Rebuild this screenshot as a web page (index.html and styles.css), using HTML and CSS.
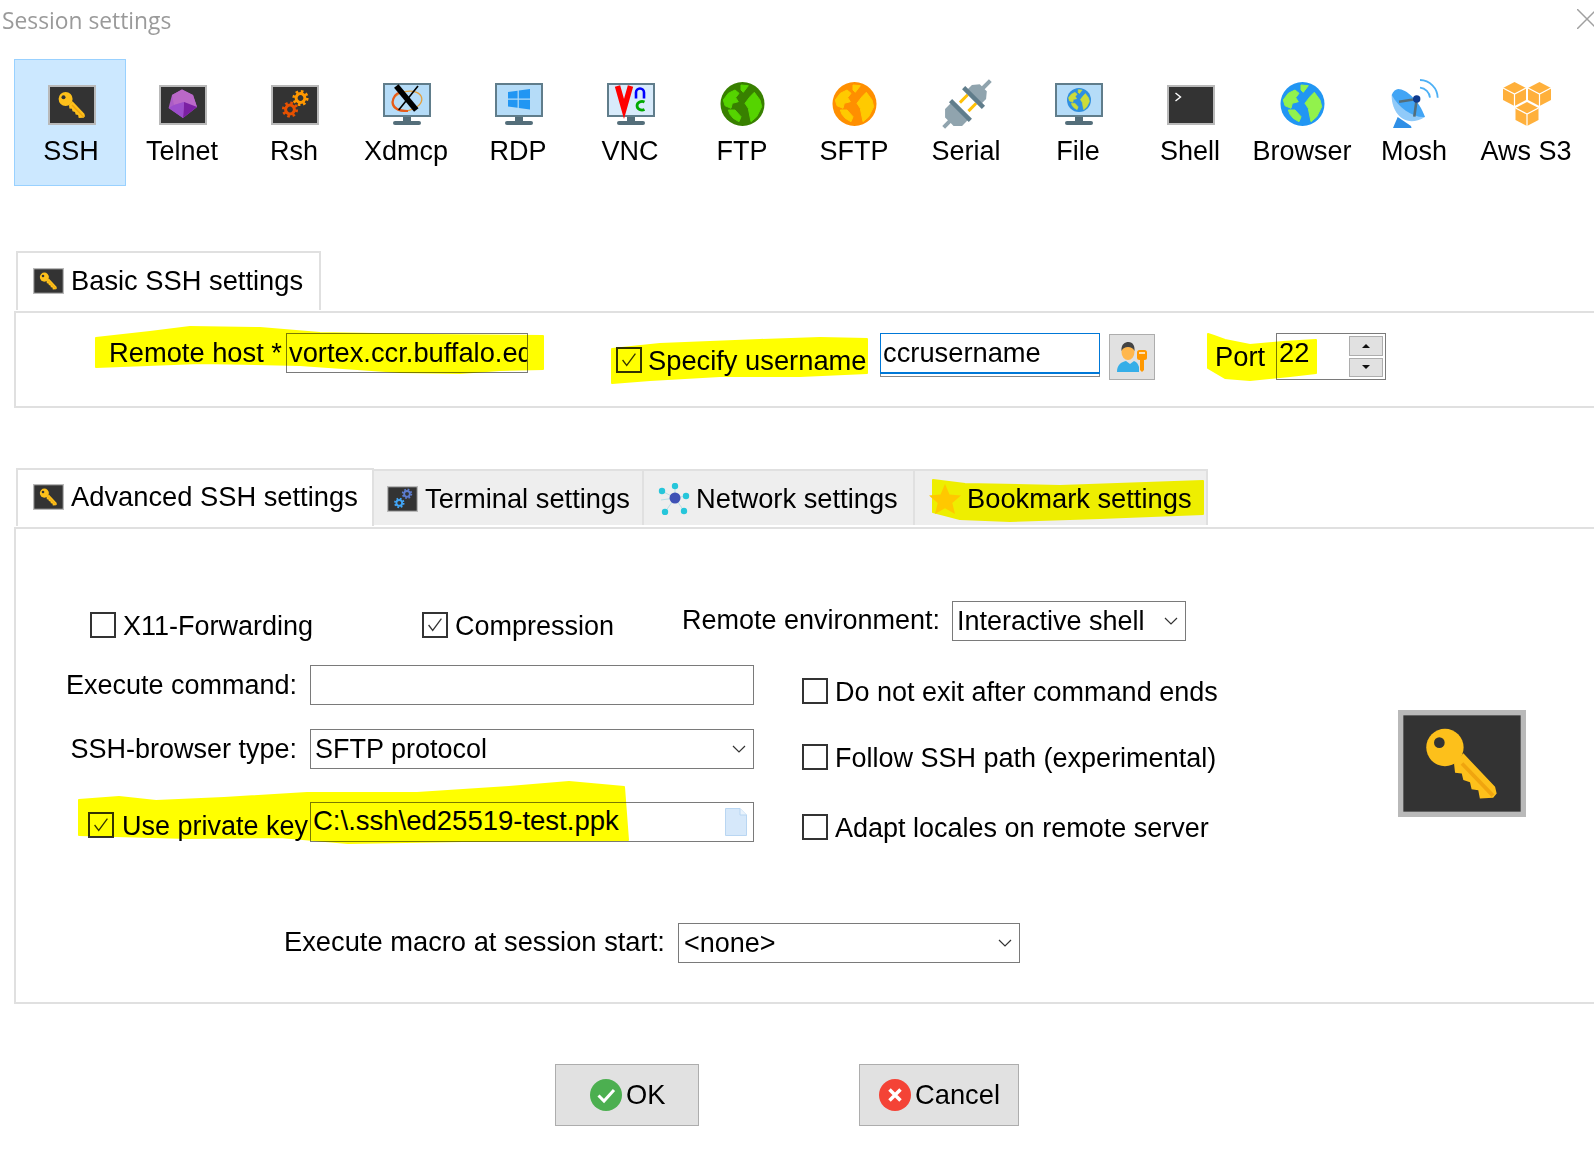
FILE: index.html
```html
<!DOCTYPE html>
<html lang="en">
<head>
<meta charset="utf-8">
<title>Session settings</title>
<link rel="stylesheet" href="styles.css">
</head>
<body>
<svg class="defs" aria-hidden="true">
  <defs>
    <g id="term"><rect x="1" y="6" width="46" height="38" fill="#333" stroke="#b9b9b9" stroke-width="2"/></g>
    <g id="key">
      <path d="M21 25 L24.5 21.2 L36.4 33.7 L37 36.2 L35.7 37.8 L30.7 38.1 L30.1 35 L27.6 34.6 L27 32 L24.5 31.2 L23.9 28.7 L21.4 28.5 Z" fill="#fdc01b"/>
      <path d="M24 25 L35.6 37" stroke="#f0a50f" stroke-width="1.4" fill="none"/>
      <circle cx="17.6" cy="19" r="7" fill="#fdc01b"/>
      <circle cx="15.5" cy="17.2" r="2" fill="#333"/>
    </g>
    <g id="key-term"><use href="#term"/><use href="#key"/></g>
    <g id="gear">
      <circle r="6.6" fill="none" stroke="currentColor" stroke-width="3" stroke-dasharray="2.6 2.6"/>
      <circle r="4.4" fill="none" stroke="currentColor" stroke-width="3"/>
    </g>
    <g id="monitor">
      <rect x="1" y="4" width="46" height="32" fill="#b5dcf8" stroke="#607d8b" stroke-width="2"/>
      <rect x="20" y="37" width="8" height="4" fill="#546e7a"/>
      <rect x="10" y="41" width="28" height="4" rx="2" fill="#546e7a"/>
    </g>
    <g id="land" fill="currentColor" stroke="currentColor" stroke-width="1" stroke-linejoin="round">
      <path d="M22 5 L29.3 5.7 L24.3 12.3 L22 10 Z"/>
      <path d="M16 10 L20 13.3 L16.7 17.7 L19.3 21.7 L13.3 23.3 L12 28.3 L6 25.7 L4.3 20 L9.300 13.3 Z"/>
      <path d="M9.300 30 L16 30 L22 36.700 L20 41.700 L14.300 38.300 L11 34.300 Z"/>
      <path d="M35.300 12.300 L41 20 L42.700 26.700 L37.700 36.700 L32 41.700 L29.300 28.300 L26 23.300 L31 16.700 Z"/>
    </g>
    <g id="cube">
      <path d="M11.5 0 L23 6 L23 18 L11.5 24 L0 18 L0 6 Z" fill="#ffb03b"/>
      <path d="M0 6 L11.5 12 L23 6 M11.5 12 L11.5 24" fill="none" stroke="#fff" stroke-width="1.2"/>
    </g>
    <g id="checkmark"><path d="M5 12 L9.5 18 L19 5" fill="none" stroke="#333" stroke-width="1.4"/></g>
  </defs>
</svg>

<div class="page">
  <header class="titlebar">
    <span class="title">Session settings</span>
    <svg class="close" viewBox="0 0 17 20"><path d="M0 0 L20 20 M0 20 L20 0" stroke="#a0a0a0" stroke-width="1.5" fill="none"/></svg>
  </header>

  <nav class="toolbar">
    <div class="tile tile-active">
      <svg class="tile-icon" viewBox="0 0 48 48"><use href="#key-term"/></svg><span>SSH</span>
    </div>
    <div class="tile">
      <svg class="tile-icon" viewBox="0 0 48 48"><use href="#term"/>
        <path d="M23 9.5 L34 15 L38 27 L24 38 L9.6 28 L13 15 Z" fill="#ab5cc6"/>
        <path d="M23 9.5 L34 15 L38 27 L25 22 L15 25 L13 15 Z" fill="#ba68c8"/>
        <path d="M25 22 L38 27 L24 38 Z" fill="#7b1fa2"/>
        <path d="M15 25 L25 22 L24 38 L9.6 28 Z" fill="#9c4dcc"/>
      </svg><span>Telnet</span>
    </div>
    <div class="tile">
      <svg class="tile-icon" viewBox="0 0 48 48"><use href="#term"/>
        <use href="#gear" x="29.5" y="18" color="#ff9800"/>
        <use href="#gear" x="19" y="29.5" color="#e65100"/>
      </svg><span>Rsh</span>
    </div>
    <div class="tile">
      <svg class="tile-icon" viewBox="0 0 48 48"><use href="#monitor"/>
        <ellipse cx="24" cy="21" rx="15" ry="9.500" transform="rotate(-12 24 21)" fill="none" stroke="#e6a03c" stroke-width="1.300"/>
        <path d="M21 11.500 C10 12 6 24 14 29 C17 31 22 31 25 31" fill="none" stroke="#e65a1a" stroke-width="2.200"/>
        <path d="M13.300 6 L33.300 30" stroke="#000" stroke-width="5.800"/>
        <path d="M35 6 L15.700 30" stroke="#000" stroke-width="1.600"/>
      </svg><span>Xdmcp</span>
    </div>
    <div class="tile">
      <svg class="tile-icon" viewBox="0 0 48 48"><use href="#monitor"/>
        <path d="M13 12 L22.6 10.7 L22.6 18.6 L13 18.6 Z M23.8 10.5 L35 9 L35 18.6 L23.8 18.6 Z M13 19.8 L22.6 19.8 L22.6 27.7 L13 26.4 Z M23.8 19.8 L35 19.8 L35 29.4 L23.8 27.9 Z" fill="#2196f3"/>
      </svg><span>RDP</span>
    </div>
    <div class="tile">
      <svg class="tile-icon" viewBox="0 0 48 48"><use href="#monitor"/>
        <rect x="2" y="5" width="44" height="30" fill="#d8ebfb"/>
        <path d="M10.500 6 L17 29 L23.500 6" fill="none" stroke="#f00" stroke-width="5.500"/>
        <path d="M29 18.500 V12.500 A4 4 0 0 1 37 12.500 V18.500" fill="none" stroke="#00f" stroke-width="2.600"/>
        <path d="M37.500 22 A5 4.300 0 1 0 37.500 29.500" fill="none" stroke="#0a0" stroke-width="2.800"/>
      </svg><span>VNC</span>
    </div>
    <div class="tile">
      <svg class="tile-icon" viewBox="0 0 48 48"><circle cx="23.500" cy="24" r="22" fill="#388000"/><use href="#land" color="#55d400"/></svg><span>FTP</span>
    </div>
    <div class="tile">
      <svg class="tile-icon" viewBox="0 0 48 48"><circle cx="23.500" cy="24" r="22" fill="#ff8f00"/><use href="#land" color="#ffca00"/></svg><span>SFTP</span>
    </div>
    <div class="tile">
      <svg class="tile-icon" viewBox="0 0 48 48">
        <g transform="rotate(45 24 24)">
          <path d="M14 13 L14 7 L19 1 L22 1 L22 -9 L26 -9 L26 1 L29 1 L34 7 L34 13 Z" fill="#90a4ae"/>
          <path d="M12 35 L12 43 L18 49 L22 49 L22 57 L26 57 L26 49 L30 49 L36 43 L36 35 Z" fill="#90a4ae"/>
          <rect x="16.500" y="17" width="3" height="11" fill="#ffc107"/>
          <rect x="28.500" y="17" width="3" height="11" fill="#ffc107"/>
          <rect x="10" y="12.500" width="28" height="4.500" fill="#607d8b"/>
          <rect x="10" y="31" width="28" height="4.500" fill="#607d8b"/>
        </g>
      </svg><span>Serial</span>
    </div>
    <div class="tile">
      <svg class="tile-icon" viewBox="0 0 48 48"><use href="#monitor"/>
        <circle cx="24" cy="20" r="12" fill="#2f8fe0"/>
        <use href="#land" color="#cddc39" transform="translate(11.200 6.900) scale(.545)"/>
      </svg><span>File</span>
    </div>
    <div class="tile">
      <svg class="tile-icon" viewBox="0 0 48 48"><use href="#term"/><path d="M8.500 13 L13.500 17 L8.500 21" fill="none" stroke="#fff" stroke-width="1.4"/></svg><span>Shell</span>
    </div>
    <div class="tile">
      <svg class="tile-icon" viewBox="0 0 48 48"><circle cx="23.500" cy="24" r="22" fill="#2196f3"/><use href="#land" color="#92f24c"/></svg><span>Browser</span>
    </div>
    <div class="tile">
      <svg class="tile-icon" viewBox="0 0 48 48">
        <path d="M2 48 L6.700 37 L20 46 L20.500 48 Z" fill="#2f8fe6"/>
        <path d="M.7 15 C0 30 12 50 34 37 Z" fill="#90caf9"/>
        <path d="M.7 15 C2 11 5 9 7.300 9 C15 9 28 20 34 37 C22 38 8 28 .7 15 Z" fill="#42a5f5"/>
        <path d="M8 21.700 L25.700 19 L23.300 36.700" fill="none" stroke="#546e7a" stroke-width="2.600"/>
        <circle cx="25.700" cy="19" r="3.700" fill="#0d3a8e"/>
        <path d="M29 7.700 A11 11 0 0 1 39 17.700 M29 0 A18 18 0 0 1 46.700 17.700" fill="none" stroke="#4db0f5" stroke-width="1.800"/>
      </svg><span>Mosh</span>
    </div>
    <div class="tile">
      <svg class="tile-icon" viewBox="0 0 48 48">
        <use href="#cube" x="0" y="2"/><use href="#cube" x="25" y="2"/><use href="#cube" x="12.500" y="22"/>
      </svg><span>Aws S3</span>
    </div>
  </nav>

  <section class="basic">
    <div class="tabs">
      <div class="tab tab-active tab-basic">
        <svg class="tab-icon" viewBox="0 5 48 40" preserveAspectRatio="none"><use href="#key-term"/></svg>Basic SSH settings
      </div>
    </div>
    <div class="panel basic-row">
      <div class="remote-label">Remote host *</div>
      <div class="field remote-field">vortex.ccr.buffalo.edu</div>
      <label class="check specify"><span class="box"><svg viewBox="0 0 24 24"><use href="#checkmark"/></svg></span>Specify username</label>
      <div class="user-field"><div class="user-inner">ccrusername</div></div>
      <div class="user-btn">
        <svg viewBox="0 0 32 30" class="user-icon">
          <path d="M1 30 C1 23 5 20 10 19 L14 22 L18 19 C21 20 22 22 23 25 L23 30 Z" fill="#35aee8"/>
          <ellipse cx="12" cy="10" rx="6.500" ry="8" fill="#ffb74d"/>
          <path d="M5.500 9 C5 2 9 0 12.500 0 C17 0 19 4 18.500 9 C17 6 15 5 12 5 C9 5 7 6 5.500 9 Z" fill="#444"/>
          <rect x="21" y="8" width="10" height="10" rx="2.500" fill="#ff9800"/>
          <rect x="23" y="10" width="6" height="2" fill="#ffe0b2"/>
          <path d="M24 18 H28 V28 L26 30 L24 28 Z" fill="#ff9800"/>
        </svg>
      </div>
      <div class="port-label">Port</div>
      <div class="port-field">
        <span class="port-value">22</span>
        <div class="spin">
          <div class="spin-btn"><span class="tri-up"></span></div>
          <div class="spin-btn"><span class="tri-down"></span></div>
        </div>
      </div>
    </div>
  </section>

  <section class="advanced">
    <div class="tabs tabs-adv">
      <div class="tab tab-active tab-adv">
        <svg class="tab-icon" viewBox="0 5 48 40" preserveAspectRatio="none"><use href="#key-term"/></svg>Advanced SSH settings
      </div>
      <div class="tab tab-idle tab-terminal">
        <svg class="tab-icon" viewBox="0 5 48 40" preserveAspectRatio="none"><use href="#term"/>
          <use href="#gear" x="31" y="17" color="#5c7ccf"/>
          <use href="#gear" x="19" y="31" color="#42a5f5"/>
        </svg>Terminal settings
      </div>
      <div class="tab tab-idle tab-network">
        <svg class="net-icon" viewBox="0 0 32 32">
          <path d="M17 15 L4 8 M17 15 L17 2 M17 15 L28 13 M17 15 L26 28 M17 15 L7 29 M17 15 L3 17" stroke="#b9dfe6" stroke-width="1"/>
          <circle cx="17" cy="15" r="5.500" fill="#3f51b5"/>
          <circle cx="4" cy="8" r="3.200" fill="#26c6da"/><circle cx="17" cy="3" r="3.200" fill="#26c6da"/>
          <circle cx="28" cy="13" r="3.200" fill="#26c6da"/><circle cx="26" cy="28" r="3.200" fill="#26c6da"/>
          <circle cx="7" cy="29" r="3.200" fill="#26c6da"/>
        </svg>Network settings
      </div>
      <div class="tab tab-idle tab-bookmark">
        <svg class="star-icon" viewBox="0 0 32 30"><path d="M16 0 L20.500 10.500 L32 11.500 L23.300 19 L26 30 L16 24.200 L6 30 L8.700 19 L0 11.500 L11.500 10.500 Z" fill="#ffc800"/></svg>Bookmark settings
      </div>
    </div>
    <div class="panel adv-panel">
      <div class="env-row">
        <label class="check x11"><span class="box"></span>X11-Forwarding</label>
        <label class="check compress"><span class="box"><svg viewBox="0 0 24 24"><use href="#checkmark"/></svg></span>Compression</label>
        <div class="env-label">Remote environment:</div>
        <div class="field select env-select">Interactive shell<svg class="chev" viewBox="0 0 14 8"><path d="M1 1 L7 7 L13 1" fill="none" stroke="#333" stroke-width="1.200"/></svg></div>
      </div>
      <div class="form-grid">
        <div class="form-label">Execute command:</div>
        <div class="field"></div>
        <label class="check side side-a"><span class="box"></span>Do not exit after command ends</label>
        <svg class="big-key" viewBox="0 5 48 40" preserveAspectRatio="none"><use href="#key-term"/></svg>

        <div class="form-label">SSH-browser type:</div>
        <div class="field select">SFTP protocol<svg class="chev" viewBox="0 0 14 8"><path d="M1 1 L7 7 L13 1" fill="none" stroke="#333" stroke-width="1.200"/></svg></div>
        <label class="check side side-b"><span class="box"></span>Follow SSH path (experimental)</label>

        <label class="check use-key"><span class="box"><svg viewBox="0 0 24 24"><use href="#checkmark"/></svg></span>Use private key</label>
        <div class="field key-field">C:\.ssh\ed25519-test.ppk
          <svg class="file-icon" viewBox="0 0 22 28"><path d="M.5 .5 H15 L21.500 7 V27.500 H.5 Z" fill="#d6e8fa" stroke="#b9d6f2"/><path d="M15 .5 V7 H21.500" fill="#eaf3fc" stroke="#b9d6f2"/></svg>
        </div>
        <label class="check side side-c"><span class="box"></span>Adapt locales on remote server</label>
      </div>
      <div class="macro-row">
        <div class="macro-label">Execute macro at session start:</div>
        <div class="field select macro-select">&lt;none&gt;<svg class="chev" viewBox="0 0 14 8"><path d="M1 1 L7 7 L13 1" fill="none" stroke="#333" stroke-width="1.200"/></svg></div>
      </div>
    </div>
  </section>

  <footer class="actions">
    <div class="btn btn-ok">
      <svg class="btn-icon" viewBox="0 0 32 32"><circle cx="16" cy="16" r="16" fill="#4caf50"/><path d="M8.500 16.500 L14 22 L24 11" fill="none" stroke="#fff" stroke-width="3"/></svg>OK
    </div>
    <div class="btn btn-cancel">
      <svg class="btn-icon" viewBox="0 0 32 32"><circle cx="16" cy="16" r="16" fill="#f44336"/><path d="M10.500 10.500 L21.500 21.500 M21.500 10.500 L10.500 21.500" fill="none" stroke="#fff" stroke-width="3.500"/></svg>Cancel
    </div>
  </footer>

  <svg class="marker" viewBox="0 0 1594 1151" aria-hidden="true">
    <path d="M96 338 L150 332 L190 327 L260 328 L320 333 L430 335 L543 336 L543 369 L500 370 L460 373 L400 372 L300 365 L200 363 L96 367 Z"/>
    <path d="M612 349 L660 344 L760 340 L820 338 L867 339 L867 373 L800 376 L720 376 L650 380 L612 383 Z"/>
    <path d="M1208 334 L1214 336 L1225 340 L1250 345 L1283 342 L1316 340 L1316 373 L1290 376 L1250 380 L1225 378 L1208 368 Z"/>
    <path d="M933 480 L965 484 L1060 486 L1203 481 L1203 514 L1100 518 L1010 521 L960 519 L933 512 Z"/>
    <path d="M79 800 L119 797 L156 801 L224 798 L307 793 L417 793 L509 787 L569 782 L624 787 L628 840 L463 841 L348 843 L280 837 L188 838 L79 835 Z"/>
  </svg>
</div>
</body>
</html>
```
FILE: styles.css
```css
* { box-sizing: border-box; }
html, body { margin: 0; padding: 0; background: #fff; overflow: hidden; }
body { font-family: "Liberation Sans", Arial, sans-serif; font-size: 27.3px; color: #000; }
.defs { position: absolute; width: 0; height: 0; }
.page { position: relative; width: 1594px; height: 1151px; overflow: hidden; isolation: isolate; }

/* title */
.titlebar { display: flex; justify-content: space-between; height: 59px; padding-left: 2px; }
.title { font-family: "Open Sans", sans-serif; font-size: 22.8px; line-height: 41px; color: #9a9a9a; }
.close { width: 17px; height: 20px; margin-top: 9px; }

/* toolbar */
.toolbar { display: grid; grid-template-columns: repeat(14, 112px); margin-left: 14px; height: 127px; font-size: 27px; }
.tile { display: flex; flex-direction: column; align-items: center; padding-top: 20px; border: 1px solid transparent; }
.tile-active { background: #cce8ff; border-color: #99d1ff; }
.tile-icon { width: 48px; height: 48px; margin-left: 2px; flex: none; overflow: visible; }
.tile span { line-height: 32px; margin-top: 7px; }
.tile-active .tile-icon { margin-left: 3px; }
.tile-active span { margin-left: 2px; }

/* tabs */
.tabs { display: flex; align-items: flex-end; margin-left: 16px; }
.tab { display: flex; align-items: center; }
.tab-active { border: 2px solid #e0e0e0; border-bottom: 0; background: #fff; padding-left: 15px; }
.tab-idle { height: 56px; background: #eee; border: 2px solid #e0e0e0; border-left: 0; border-bottom: 0; }
.tab-icon { width: 31px; height: 26px; margin-right: 7px; flex: none; }
.tab-basic { width: 305px; height: 59px; margin-bottom: 1px; padding-bottom: 2px; }
.tab-adv { width: 358px; height: 58px; margin-bottom: 1px; padding-bottom: 2px; }
.tab-terminal { width: 270px; padding-left: 13px; margin-bottom: 2px; padding-top: 2px; }
.tab-network { width: 271px; padding-left: 14px; margin-bottom: 2px; padding-top: 2px; }
.net-icon { width: 32px; height: 32px; margin-right: 6px; flex: none; }
.tab-bookmark { width: 293px; padding-left: 14px; margin-bottom: 2px; padding-top: 2px; }
.star-icon { width: 32px; height: 30px; margin-right: 6px; flex: none; }

/* panels */
.basic { margin-top: 65px; }
.advanced { margin-top: 60px; }
.panel { margin-left: 14px; border: 2px solid #e0e0e0; border-right: 0; background: #fff; }
.basic-row { display: flex; align-items: flex-start; height: 97px; padding-top: 20px; }
.adv-panel { height: 477px; padding-top: 72px; }

/* shared controls */
.field { position: relative; height: 40px; border: 1px solid #7a7a7a; background: #fff; line-height: 38px; padding-left: 2px; white-space: nowrap; overflow: hidden; }
.select { display: flex; justify-content: space-between; align-items: center; padding: 0 7px 0 4px; font-size: 27px; }
.chev { width: 14px; height: 8px; flex: none; }
.check { display: inline-flex; align-items: center; gap: 7px; line-height: 32px; white-space: nowrap; padding-top: 2px; font-size: 27px; }
.box { display: block; width: 26px; height: 26px; margin-top: -2px; border: 2px solid #333; background: #fff; flex: none; }
.box svg { display: block; width: 22px; height: 22px; }

/* basic row */
.remote-label { width: 177px; margin-left: 93px; margin-top: 4px; line-height: 32px; white-space: nowrap; }
.remote-field { width: 242px; }
.specify { margin-left: 88px; margin-top: 10px; gap: 6px; width: 250px; font-size: 27.3px; }
.user-field { width: 220px; height: 44px; margin-left: 14px; border: 1px solid #888; border-top: 0; }
.user-inner { height: 41px; margin: 0 -1px; border: 1px solid #0078d7; border-bottom-width: 2px; line-height: 38px; padding-left: 2px; background: #fff; }
.user-btn { display: flex; justify-content: center; align-items: center; width: 46px; height: 46px; margin: 1px 0 0 9px; background: #e1e1e1; border: 1px solid #adadad; }
.user-icon { width: 32px; height: 30px; }
.port-label { width: 61px; margin: 8px 0 0 60px; line-height: 32px; }
.port-field { display: flex; justify-content: space-between; width: 110px; height: 47px; border: 1px solid #7a7a7a; padding: 2px; }
.port-value { line-height: 34px; }
.spin { display: flex; flex-direction: column; gap: 2px; }
.spin-btn { display: flex; align-items: center; justify-content: center; width: 34px; height: 20px; background: #e1e1e1; border: 1px solid #adadad; }
.tri-up { width: 0; height: 0; border: 4px solid transparent; border-top: 0; border-bottom: 4px solid #111; }
.tri-down { width: 0; height: 0; border: 4px solid transparent; border-bottom: 0; border-top: 4px solid #111; }

/* advanced */
.env-row { display: flex; align-items: flex-start; }
.x11 { width: 332px; margin: 7px 0 0 74px; }
.compress { width: 260px; margin-top: 7px; }
.env-label { width: 270px; line-height: 38px; white-space: nowrap; font-size: 27px; }
.env-select { width: 234px; }
.form-grid { display: grid; grid-template-columns: 294px 444px 644px 128px; grid-template-rows: 64px 73px 40px; align-items: start; margin-top: 23px; }
.form-label { text-align: right; padding-right: 13px; line-height: 40px; white-space: nowrap; font-size: 27px; }
.side { margin-left: 48px; }
.side-a { margin-top: 9px; }
.side-b { margin-top: 11px; }
.side-c { margin-top: 8px; }
.big-key { grid-column: 4; grid-row: 1 / span 3; width: 128px; height: 107px; margin-top: 45px; }
.use-key { margin-left: 72px; margin-top: 6px; gap: 8px; width: 222px; }
.key-field { line-height: 35px; padding-left: 2px; overflow: visible; font-size: 27.5px; }
.file-icon { position: absolute; right: 6px; top: 5px; width: 22px; height: 28px; }
.macro-row { display: flex; margin: 81px 0 0 268px; }
.macro-label { width: 394px; line-height: 38px; white-space: nowrap; }
.macro-select { width: 342px; padding-left: 5px; }

/* footer */
.actions { display: flex; margin: 60px 0 0 555px; }
.btn { display: flex; align-items: center; height: 62px; background: #e1e1e1; border: 1px solid #adadad; }
.btn-ok { width: 144px; padding-left: 34px; }
.btn-cancel { width: 160px; margin-left: 160px; padding-left: 19px; }
.btn-icon { width: 32px; height: 32px; margin-right: 4px; flex: none; }

/* highlighter marks lying over the dialog */
.marker { position: absolute; left: 0; top: 0; width: 1594px; height: 1151px; mix-blend-mode: multiply; pointer-events: none; }
.marker path { fill: #ff0; stroke: #ff0; stroke-width: 2; stroke-linejoin: round; }
```
